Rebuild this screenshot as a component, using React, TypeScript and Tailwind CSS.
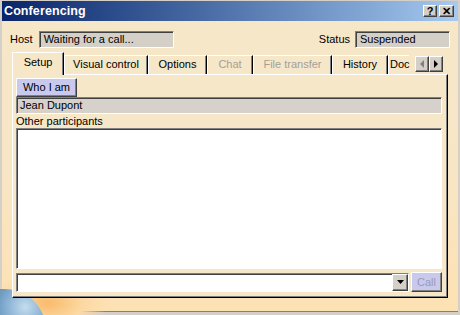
import React from 'react';

const font = "font-['Liberation_Sans',Arial,sans-serif]";

const tabs = [
  { name: 'Setup', w: 'w-[52px]', active: true },
  { name: 'Visual control', w: 'w-[84px]' },
  { name: 'Options', w: 'w-[59px]' },
  { name: 'Chat', w: 'w-[46px]', disabled: true },
  { name: 'File transfer', w: 'w-[79px]', disabled: true },
  { name: 'History', w: 'w-[56px]' },
  { name: 'Doc', w: 'w-[21px]', clipped: true },
];

const raised =
  'border border-t-white border-l-white border-b-[#404040] border-r-[#404040] shadow-[inset_-1px_-1px_0_#808080]';
const inset =
  'border border-t-[#808080] border-l-[#808080] border-b-white border-r-white shadow-[inset_1px_1px_0_#404040]';

const Triangle: React.FC<{ dir: 'left' | 'right' | 'down'; color: string }> = ({ dir, color }) => {
  const pts = dir === 'left' ? '4,0 4,8 0,4' : dir === 'right' ? '0,0 0,8 4,4' : '0,0 7,0 3.5,4';
  const w = dir === 'down' ? 7 : 4;
  const h = dir === 'down' ? 4 : 8;
  return (
    <svg width={w} height={h} viewBox={`0 0 ${w} ${h}`}>
      <polygon points={pts} fill={color} />
    </svg>
  );
};

export default function App() {
  return (
    <div className={`${font} w-[460px] h-[315px] bg-[#d4d0c8] pt-px px-[2px] pb-[3px] flex flex-col text-[11px] text-black overflow-hidden`}>
      {/* title bar */}
      <div className="h-[20px] flex items-center justify-between pl-[2px] pr-[4px] bg-gradient-to-r from-[#0a246a] to-[#a6caf0]">
        <span className="text-white font-bold text-[12.5px] tracking-[0.1px]">Conferencing</span>
        <div className="flex gap-[2px]">
          <div className={`w-[14px] h-[12px] bg-[#d4d0c8] ${raised} flex items-center justify-center font-bold text-[11px] leading-none`}>?</div>
          <div className={`w-[15px] h-[12px] bg-[#d4d0c8] ${raised} flex items-center justify-center font-bold text-[11px] leading-none`}>✕</div>
        </div>
      </div>

      {/* body */}
      <div className="relative flex-1 flex flex-col px-[10px] pt-[10px] bg-gradient-to-b from-[#f6e7c9] via-[#f7e6c6] to-[#fde1b3] border-b border-[#808080]">
        {/* decorative earth + glow */}
        <div className="absolute left-[-14px] bottom-[-24px] w-[120px] h-[64px] rounded-full bg-[radial-gradient(closest-side,#f9bb6c,#fcd9a4_60%,transparent)]" />
        <div className="absolute left-[-50px] bottom-[-60px] w-[94px] h-[82px] rounded-full bg-[radial-gradient(circle_at_78%_22%,#c4dcee,#7aa6cc_24%,#34577f_58%,#182640)]" />

        {/* host row */}
        <div className="relative flex items-center h-[17px] -ml-[2px]">
          <span>Host</span>
          <div className={`ml-[6px] w-[135px] h-[17px] bg-[#d4d0c8] ${inset} flex items-center pl-[4px]`}>Waiting for a call...</div>
          <span className="ml-auto">Status</span>
          <div className={`ml-[5px] w-[95px] h-[17px] bg-[#d4d0c8] ${inset} flex items-center pl-[4px] -mr-[2px]`}>Suspended</div>
        </div>

        {/* tab strip */}
        <div className="relative flex items-end h-[22px] mt-[4px]">
          {tabs.map(t => (
            <div
              key={t.name}
              className={`${t.w} ${t.active ? 'h-[23px] -mb-px z-10 pb-[4px]' : 'h-[19px] pb-[2px]'} bg-[#f6e7c9] border-l border-t border-l-white border-t-white ${
                t.clipped ? '' : 'border-r border-r-black shadow-[inset_-1px_0_0_#808080]'
              } flex items-center ${t.clipped ? 'justify-start pl-px whitespace-nowrap' : 'justify-center'} ${
                t.disabled ? 'text-[#a3a09a]' : 'text-black'
              }`}
            >
              {t.name}
            </div>
          ))}
          <div className="ml-[6px] mb-[2px] flex">
            <div className={`w-[14px] h-[16px] bg-[#d4d0c8] ${raised} flex items-center justify-center`}>
              <Triangle dir="left" color="#808080" />
            </div>
            <div className={`w-[14px] h-[16px] bg-[#d4d0c8] ${raised} flex items-center justify-center`}>
              <Triangle dir="right" color="#000" />
            </div>
          </div>
        </div>

        {/* tab panel */}
        <div className="relative h-[224px] bg-[#f6e7c9] border border-t-white border-l-white border-r-black border-b-black shadow-[inset_-1px_-1px_0_#808080] px-[3px] pt-[3px] flex flex-col">
          <button className={`w-[61px] h-[19px] bg-[#c9c9ee] ${raised} flex items-center justify-center`}>Who I am</button>
          <div className={`mr-[2px] h-[17px] bg-[#d6d2cb] ${inset} flex items-center pl-[3px]`}>Jean Dupont</div>
          <div className="h-[14px] flex items-end leading-none pb-px">Other participants</div>
          <div className={`mr-[2px] h-[141px] bg-white ${inset}`} />
          <div className="flex items-center mt-[3px] mr-[2px]">
            <div className={`w-[393px] h-[19px] bg-white ${inset} flex justify-end items-stretch`}>
              <div className={`w-[16px] bg-[#d4d0c8] ${raised} flex items-center justify-center`}>
                <Triangle dir="down" color="#000" />
              </div>
            </div>
            <button className={`ml-auto w-[31px] h-[20px] bg-[#c9c9ee] ${raised} flex items-center justify-center text-[#9a9ab4]`}>Call</button>
          </div>
        </div>
      </div>
    </div>
  );
}
